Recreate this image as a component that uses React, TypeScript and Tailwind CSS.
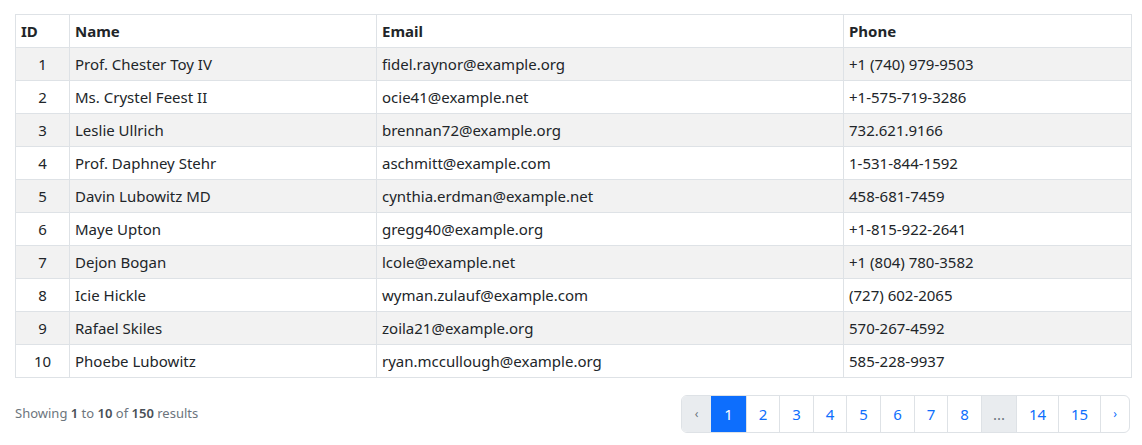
import React from "react";

const users = [
  { id: 1, name: "Prof. Chester Toy IV", email: "fidel.raynor@example.org", phone: "+1 (740) 979-9503" },
  { id: 2, name: "Ms. Crystel Feest II", email: "ocie41@example.net", phone: "+1-575-719-3286" },
  { id: 3, name: "Leslie Ullrich", email: "brennan72@example.org", phone: "732.621.9166" },
  { id: 4, name: "Prof. Daphney Stehr", email: "aschmitt@example.com", phone: "1-531-844-1592" },
  { id: 5, name: "Davin Lubowitz MD", email: "cynthia.erdman@example.net", phone: "458-681-7459" },
  { id: 6, name: "Maye Upton", email: "gregg40@example.org", phone: "+1-815-922-2641" },
  { id: 7, name: "Dejon Bogan", email: "lcole@example.net", phone: "+1 (804) 780-3582" },
  { id: 8, name: "Icie Hickle", email: "wyman.zulauf@example.com", phone: "(727) 602-2065" },
  { id: 9, name: "Rafael Skiles", email: "zoila21@example.org", phone: "570-267-4592" },
  { id: 10, name: "Phoebe Lubowitz", email: "ryan.mccullough@example.org", phone: "585-228-9937" },
];

// page links with their measured widths
const pages = [
  { label: "1", w: "w-[35px]" },
  { label: "2", w: "w-[33px]" },
  { label: "3", w: "w-[34px]" },
  { label: "4", w: "w-[33px]" },
  { label: "5", w: "w-[34px]" },
  { label: "6", w: "w-[34px]" },
  { label: "7", w: "w-[33px]" },
  { label: "8", w: "w-[34px]" },
  { label: "...", w: "w-[35px]" },
  { label: "14", w: "w-[42px]" },
  { label: "15", w: "w-[42px]" },
];

export default function App() {
  return (
    <div
      className="bg-white px-[15px] pt-[14px] text-[#212529]"
      style={{ fontFamily: '"Noto Sans", "Open Sans", sans-serif' }}
    >
      <table className="w-[1116px] table-fixed border-collapse text-[15px] leading-6">
        <colgroup>
          <col className="w-[54px]" />
          <col className="w-[307px]" />
          <col className="w-[467px]" />
          <col className="w-[288px]" />
        </colgroup>
        <thead>
          <tr>
            {["ID", "Name", "Email", "Phone"].map((h) => (
              <th key={h} className="border border-[#dee2e6] px-[5px] py-1 text-left font-bold">
                {h}
              </th>
            ))}
          </tr>
        </thead>
        <tbody>
          {users.map((u, i) => (
            <tr key={u.id} className={i % 2 === 0 ? "bg-[#f2f2f2]" : "bg-white"}>
              <td className="border border-[#dee2e6] px-[5px] py-1 text-center">{u.id}</td>
              <td className="border border-[#dee2e6] px-[5px] py-1">{u.name}</td>
              <td className="border border-[#dee2e6] px-[5px] py-1">{u.email}</td>
              <td className="border border-[#dee2e6] px-[5px] py-1">{u.phone}</td>
            </tr>
          ))}
        </tbody>
      </table>

      {/* Footer with count and pager */}
      <div className="mt-[17px] flex w-[1115px] items-center justify-between">
        <p className="text-[13px] text-[#6c757d]">
          Showing <span className="font-semibold text-[#495057]">1</span> to{" "}
          <span className="font-semibold text-[#495057]">10</span> of{" "}
          <span className="font-semibold text-[#495057]">150</span> results
        </p>
        <nav className="flex h-[38px] overflow-hidden rounded-md border border-[#dee2e6] text-[15px]">
          <span className="flex w-[29px] items-center justify-center bg-[#e9ecef] text-[12px] text-[#6c757d]">
            ‹
          </span>
          {pages.map((p) =>
            p.label === "1" ? (
              <span key={p.label} className={`flex ${p.w} items-center justify-center bg-[#0d6efd] text-white`}>
                {p.label}
              </span>
            ) : p.label === "..." ? (
              <span
                key={p.label}
                className={`flex ${p.w} items-center justify-center border-l border-[#dee2e6] bg-[#e9ecef] text-[#6c757d]`}
              >
                ...
              </span>
            ) : (
              <a
                key={p.label}
                href="#"
                className={`flex ${p.w} items-center justify-center border-l border-[#dee2e6] text-[#0d6efd]`}
              >
                {p.label}
              </a>
            )
          )}
          <a
            href="#"
            className="flex w-[29px] items-center justify-center border-l border-[#dee2e6] text-[12px] text-[#0d6efd]"
          >
            ›
          </a>
        </nav>
      </div>
    </div>
  );
}
